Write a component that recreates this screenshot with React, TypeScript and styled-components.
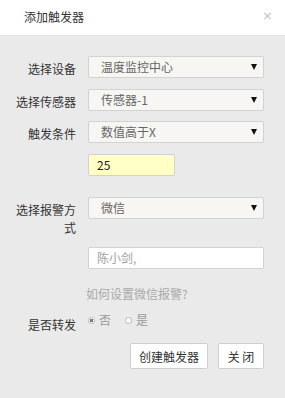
import React from "react";
import styled, { createGlobalStyle } from "styled-components";

const GlobalStyle = createGlobalStyle`
  html, body {
    margin: 0;
    padding: 0;
    background: #eaeaea;
  }
  body {
    font-family: "Noto Sans CJK SC", "Noto Sans", "Liberation Sans", sans-serif;
    font-size: 12px;
    color: #333;
  }
`;

const Dialog = styled.div`
  width: 285px;
  height: 398px;
  background: #eaeaea;
  display: flex;
  flex-direction: column;
`;

const Header = styled.div`
  height: 36px;
  background: #fff;
  display: flex;
  align-items: center;
  justify-content: space-between;
  padding: 0 12px 0 24px;
  box-sizing: border-box;
  border-bottom: 1px solid #e2e2e2;
`;

const Title = styled.div`
  font-size: 12px;
  color: #333;
  margin-top: -2px;
`;

const Close = styled.span`
  font-size: 13px;
  color: #c4c4c4;
  margin-top: -4px;
  font-family: "DejaVu Sans", sans-serif;
`;

const Body = styled.div`
  padding: 20px 21px 0 16px;
  display: flex;
  flex-direction: column;
`;

const Row = styled.div<{ $mt?: number }>`
  display: flex;
  align-items: flex-start;
  margin-top: ${({ $mt }) => $mt ?? 0}px;
`;

const Label = styled.div<{ $pt?: number }>`
  width: 60px;
  flex: none;
  margin-right: 12px;
  text-align: right;
  line-height: 18px;
  padding-top: ${({ $pt }) => $pt ?? 4}px;
  color: #333;
`;

const Select = styled.div`
  position: relative;
  flex: 1;
  height: 22px;
  box-sizing: border-box;
  border: 1px solid #d2d2d2;
  border-radius: 2px;
  background: #f7f6f2;
  color: #666;
  line-height: 20px;
  padding-left: 12px;
`;

const Arrow = styled.span`
  position: absolute;
  right: 6px;
  top: 7px;
  width: 0;
  height: 0;
  border-left: 3.5px solid transparent;
  border-right: 3.5px solid transparent;
  border-top: 6px solid #111;
`;

const Input = styled.div<{ $bg?: string; $w?: number; $color?: string }>`
  height: 22px;
  box-sizing: border-box;
  width: ${({ $w }) => ($w ? `${$w}px` : "auto")};
  flex: ${({ $w }) => ($w ? "none" : 1)};
  border: 1px solid #d2d2d2;
  border-radius: 2px;
  background: ${({ $bg }) => $bg ?? "#fff"};
  color: ${({ $color }) => $color ?? "#222"};
  line-height: 20px;
  padding-left: 8px;
  font-size: 12px;
`;

const Hint = styled.div`
  margin-left: 70px;
  margin-top: 17px;
  color: #a9a9a9;
  line-height: 16px;
`;

const RadioGroup = styled.div`
  display: flex;
  align-items: center;
  gap: 14px;
`;

const RadioItem = styled.label`
  display: flex;
  align-items: center;
  gap: 4px;
  color: #9a9a9a;
  line-height: 16px;
`;

const RadioDot = styled.span<{ $on?: boolean }>`
  width: 7px;
  height: 7px;
  box-sizing: border-box;
  border-radius: 50%;
  border: 1px solid #b5b5b5;
  background: ${({ $on }) =>
    $on ? "radial-gradient(circle, #777 0 1.5px, #fff 2px)" : "#fff"};
`;

const Actions = styled.div`
  display: flex;
  justify-content: flex-end;
  gap: 10px;
  margin-top: 9px;
`;

const Button = styled.button<{ $w: number }>`
  width: ${({ $w }) => $w}px;
  height: 26px;
  background: #fff;
  border: 1px solid #d0d0d0;
  border-radius: 2px;
  font-family: inherit;
  font-size: 12px;
  color: #333;
  padding: 0;
`;

export default function App() {
  return (
    <>
      <GlobalStyle />
      <Dialog>
        <Header>
          <Title>添加触发器</Title>
          <Close>×</Close>
        </Header>
        <Body>
          <Row>
            <Label>选择设备</Label>
            <Select>
              温度监控中心
              <Arrow />
            </Select>
          </Row>
          <Row $mt={11}>
            <Label>选择传感器</Label>
            <Select>
              传感器-1
              <Arrow />
            </Select>
          </Row>
          <Row $mt={10}>
            <Label>触发条件</Label>
            <Select>
              数值高于X
              <Arrow />
            </Select>
          </Row>
          <Row $mt={11}>
            <Label />
            <Input $bg="#ffffc6" $w={87}>
              25
            </Input>
          </Row>
          <Row $mt={21}>
            <Label>选择报警方式</Label>
            <Select>
              微信
              <Arrow />
            </Select>
          </Row>
          <Row $mt={10}>
            <Label $pt={0} />
            <Input $color="#a0a0a0">陈小剑,</Input>
          </Row>
          <Hint>如何设置微信报警?</Hint>
          <Row $mt={10}>
            <Label>是否转发</Label>
            <RadioGroup>
              <RadioItem>
                <RadioDot $on />否
              </RadioItem>
              <RadioItem>
                <RadioDot />是
              </RadioItem>
            </RadioGroup>
          </Row>
          <Actions>
            <Button $w={78}>创建触发器</Button>
            <Button $w={46}>关 闭</Button>
          </Actions>
        </Body>
      </Dialog>
    </>
  );
}
